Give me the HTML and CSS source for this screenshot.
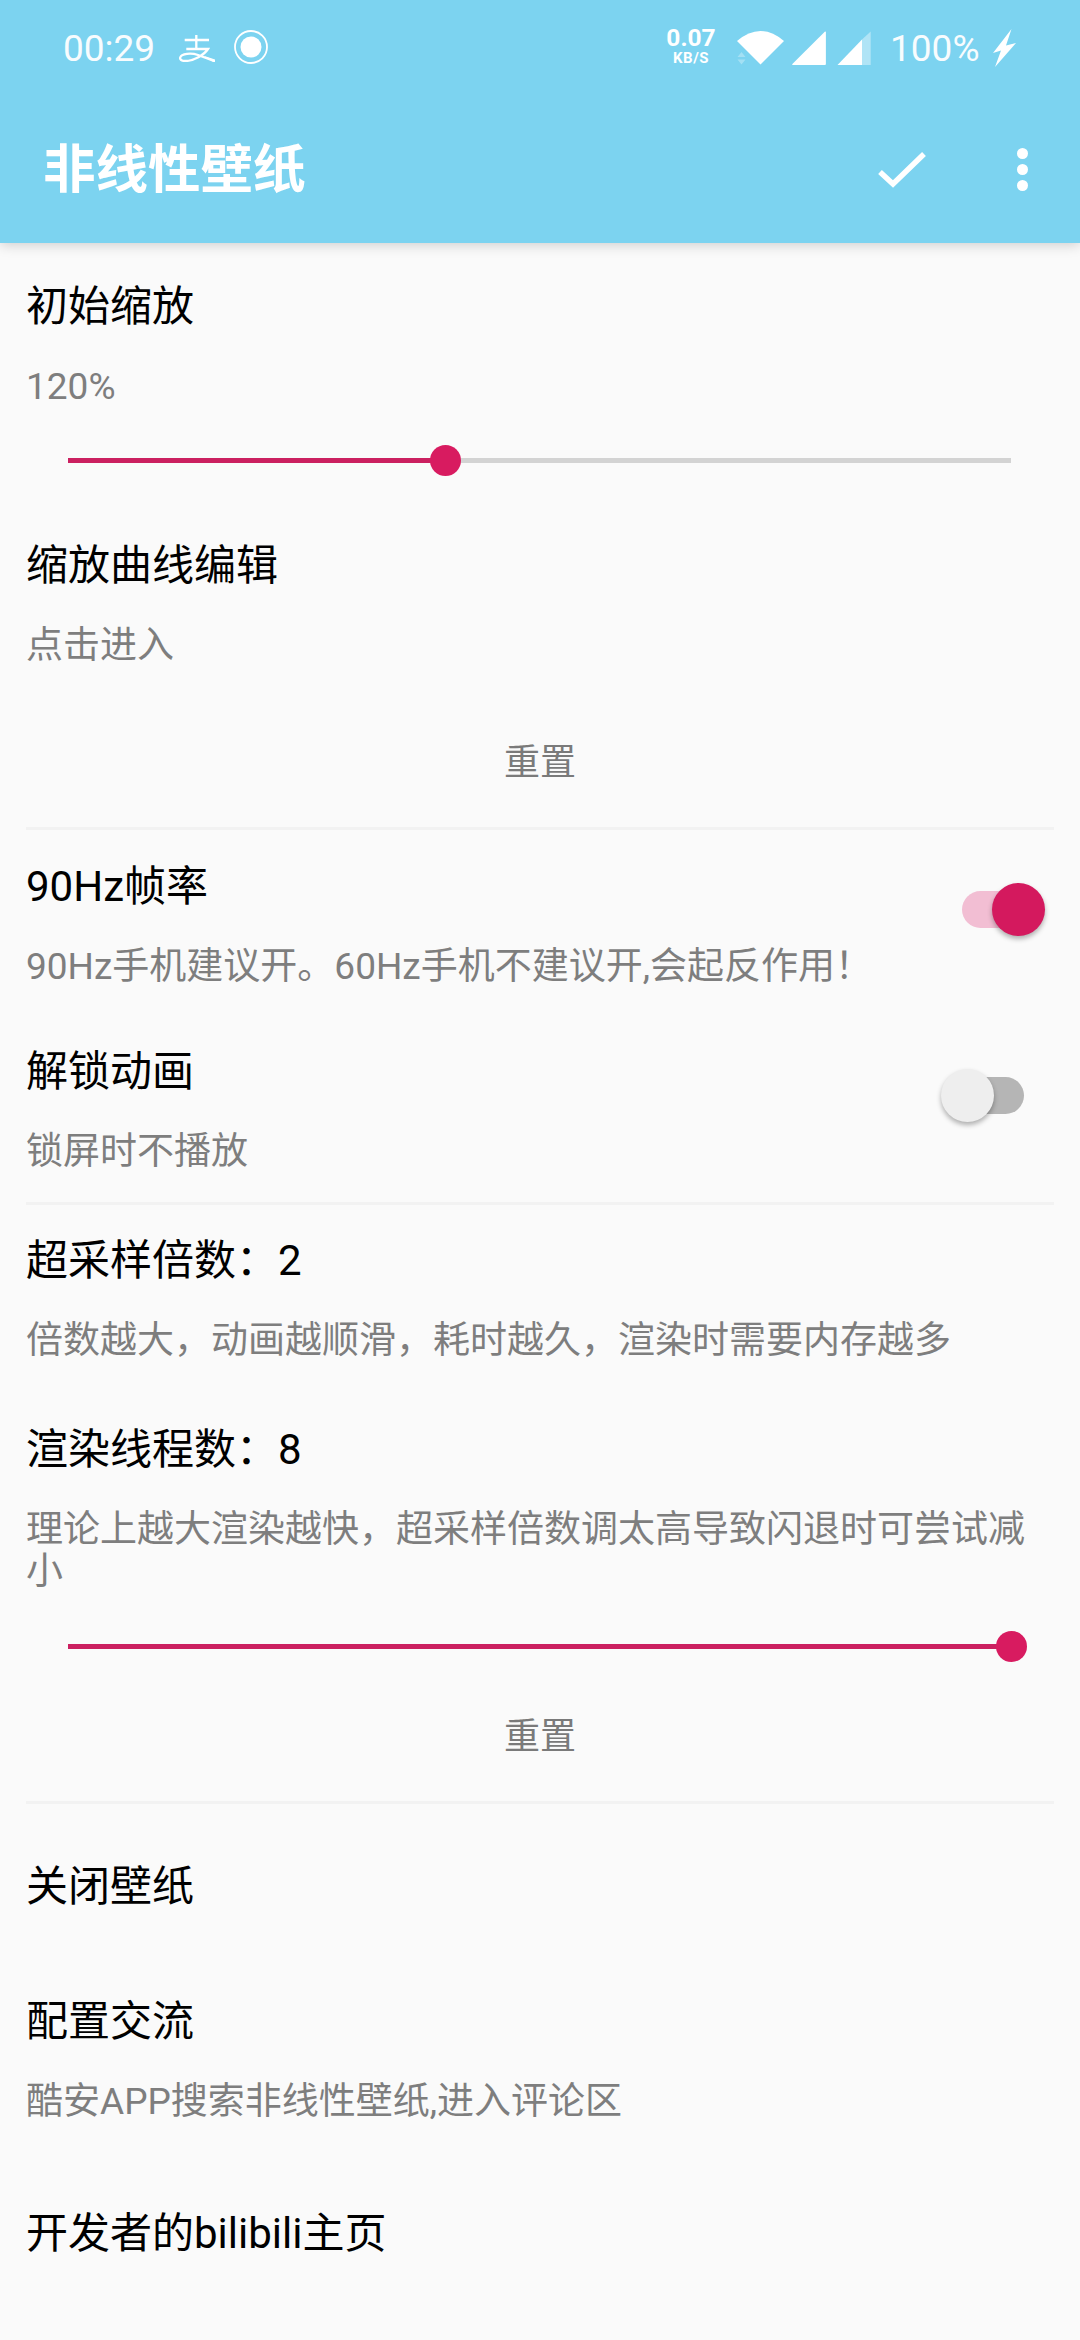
FILE: index.html
```html
<!DOCTYPE html>
<html lang="zh-CN">
<head>
<meta charset="utf-8">
<title>非线性壁纸</title>
<link rel="stylesheet" href="styles.css">
</head>
<body>
<header class="appbar">
  <div class="status">
    <div class="status-left">
      <span class="clock">00:29</span>
      <svg class="ic-alipay" viewBox="0 0 36 28" fill="none" stroke="#fff" stroke-width="2.3"><path d="M5.700 6H30M17.300 1V15M7.300 15H29C25 21 15 27 6 27C2 27 0.800 25 1.200 23.500C2.500 19.500 12 18.500 19 21C24 23 30 25 35 27"/><path d="M24 21.500L36 25.500V29Z" fill="#fff" stroke="none"/></svg>
      <svg class="ic-record" viewBox="0 0 34 34"><circle cx="17" cy="17" r="16" fill="none" stroke="#fff" stroke-width="1.8"/><circle cx="17" cy="17" r="10.500" fill="#fff"/></svg>
    </div>
    <div class="status-right">
      <div class="speed"><span class="speed-val">0.07</span><span class="speed-unit">KB/S</span></div>
      <svg class="ic-wifi" viewBox="0 0 47 34"><path d="M0 10Q23.500 -10 47 10L23.500 33.500Z" fill="#fff"/><path d="M4.500 21L8.500 26H.5ZM.5 28.500H8.500L4.500 33.500Z" fill="#fff" opacity=".3"/></svg>
      <svg class="ic-signal" viewBox="0 0 34 34"><path d="M33 0.500C33.700 0.500 33.900 1 33.900 1.500V32.500C33.900 33.500 33.500 34 32.500 34H1C0 34 0 33.300 .6 32.700Z" fill="#fff"/></svg>
      <svg class="ic-signal second" viewBox="0 0 34 34"><path d="M25 8.500V34H0.500Z" fill="#fff"/><path d="M25 8.500L33.700 0.500V34H25Z" fill="#fff" opacity=".4"/></svg>
      <span class="battery">100%</span>
      <svg class="ic-bolt" viewBox="0 0 23 38"><path d="M18.500 0L0 24L8 21.500L2 38L23 14L13 16.500Z" fill="#fff"/></svg>
    </div>
  </div>
  <div class="toolbar">
    <h1 class="app-title">非线性壁纸</h1>
    <svg class="ic-check" viewBox="0 0 48 37"><path d="M2 21L15 33L46 3" fill="none" stroke="#fff" stroke-width="5.5"/></svg>
    <div class="more"><i></i><i></i><i></i></div>
  </div>
</header>
<main class="list">
  <section class="group">
    <div class="pref first">
      <div class="title">初始缩放</div>
      <div class="sum">120%</div>
    </div>
    <div class="slider"><div class="track"><div class="fill" style="width:40%"></div><div class="thumb" style="left:40%"></div></div></div>
    <div class="pref next">
      <div class="title">缩放曲线编辑</div>
      <div class="sum">点击进入</div>
    </div>
    <div class="reset">重置</div>
  </section>
  <section class="group">
    <div class="pref switch-row s1">
      <div class="text">
        <div class="title">90Hz帧率</div>
        <div class="sum">90Hz手机建议开。60Hz手机不建议开,会起反作用！</div>
      </div>
      <div class="switch on"><span class="knob"></span></div>
    </div>
    <div class="pref switch-row s2">
      <div class="text">
        <div class="title">解锁动画</div>
        <div class="sum">锁屏时不播放</div>
      </div>
      <div class="switch"><span class="knob"></span></div>
    </div>
  </section>
  <section class="group">
    <div class="pref p3">
      <div class="title">超采样倍数：2</div>
      <div class="sum">倍数越大，动画越顺滑，耗时越久，渲染时需要内存越多</div>
    </div>
    <div class="pref p4">
      <div class="title">渲染线程数：8</div>
      <div class="sum">理论上越大渲染越快，超采样倍数调太高导致闪退时可尝试减小</div>
    </div>
    <div class="slider"><div class="track"><div class="fill" style="width:100%"></div><div class="thumb" style="left:100%"></div></div></div>
    <div class="reset reset-b">重置</div>
  </section>
  <section class="group last">
    <div class="pref p5"><div class="title">关闭壁纸</div></div>
    <div class="pref p6">
      <div class="title">配置交流</div>
      <div class="sum">酷安APP搜索非线性壁纸,进入评论区</div>
    </div>
    <div class="pref p7"><div class="title">开发者的bilibili主页</div></div>
  </section>
</main>
</body>
</html>
```
FILE: styles.css
```css
* { box-sizing: border-box; }
html, body { margin: 0; padding: 0; }
body {
  width: 1080px;
  height: 2340px;
  overflow: hidden;
  background: #fafafa;
  font-family: Roboto, "Noto Sans CJK SC", sans-serif;
}
.appbar {
  height: 243px;
  background: #7cd3f0;
  box-shadow: 0 2px 12px rgba(0,0,0,.18);
  position: relative;
}
.status {
  height: 96px;
  display: flex;
  justify-content: space-between;
  align-items: center;
  padding: 0 64px 0 63px;
  color: #fff;
}
.status-left, .status-right { display: flex; align-items: center; }
.clock { font-size: 37px; font-weight: 400; width: 116px; opacity: .95; }
.ic-alipay { width: 36px; height: 28px; margin-right: 19px; }
.ic-record { width: 34px; height: 34px; margin-top: -2px; }
.speed { display: flex; flex-direction: column; align-items: center; width: 48px; margin-right: 22px; font-weight: 700; }
.speed-val { font-size: 24.5px; line-height: 20px; }
.speed-unit { font-size: 15px; line-height: 16px; margin: 2px 0; letter-spacing: .5px; }
.ic-wifi { width: 47px; height: 34px; margin-right: 8px; }
.ic-signal { width: 34px; height: 34px; margin-right: 11px; }
.ic-signal.second { margin-right: 19px; }
.battery { font-size: 37px; font-weight: 400; width: 90px; margin-right: 13px; white-space: nowrap; opacity: .95; }
.ic-bolt { width: 23px; height: 38px; }
.toolbar { height: 147px; display: flex; align-items: center; padding-left: 43px; }
.app-title { flex: 1; margin: 0; font-size: 52.5px; font-weight: 700; color: #fff; line-height: 60px; }
.ic-check { width: 48px; height: 37px; margin-right: 91px; }
.more { display: flex; flex-direction: column; gap: 5px; margin-right: 52px; }
.more i { display: block; width: 11px; height: 11px; border-radius: 50%; background: #fff; }
.group { border-bottom: 3px solid #f2f2f2; margin-right: 26px; margin-left: 26px; }
.group.last { border-bottom: 0; }
.title { font-size: 42px; line-height: 56px; color: #000; }
.sum { font-size: 37px; line-height: 42px; color: #7e7e7e; margin-top: 31px; }
.first { padding-top: 36px; }
.slider { padding: 0 43px 0 42px; height: 49px; margin-top: 28px; display: flex; align-items: center; }
.p4 + .slider { margin-top: 29px; }
.track { position: relative; flex: 1; height: 5px; background: #d3d3d3; }
.fill { height: 5px; background: #cb2060; }
.thumb { position: absolute; top: 50%; width: 31px; height: 31px; margin: -15.5px 0 0 -15.5px; border-radius: 50%; background: #d81b60; }
.next { padding-top: 53px; }
.reset { text-align: center; font-size: 36px; line-height: 44px; color: #7a7a7a; margin-top: 74px; padding-bottom: 42px; }
.reset-b { margin-top: 44px; }
.switch-row { display: flex; justify-content: space-between; }
.s1 { padding-top: 29px; }
.s2 { padding-top: 56px; padding-bottom: 29px; }
.switch { position: relative; width: 62px; height: 37px; margin: 0 30px 0 0; border-radius: 19px; background: #f2bed3; align-self: flex-start; }
.s1 .switch { margin-top: 32px; }
.s2 .switch { margin-top: 33px; background: #b5b5b5; }
.knob { position: absolute; top: -8px; left: -21px; width: 53px; height: 53px; border-radius: 50%; background: #eee; box-shadow: 0 3px 5px rgba(0,0,0,.3); }
.switch.on .knob { left: 30px; background: #d4195e; }
.p3 { padding-top: 28px; }
.p4 { padding-top: 60px; }
.p5 { padding-top: 55px; }
.p6 { padding-top: 79px; }
.p7 { padding-top: 83px; }
```
